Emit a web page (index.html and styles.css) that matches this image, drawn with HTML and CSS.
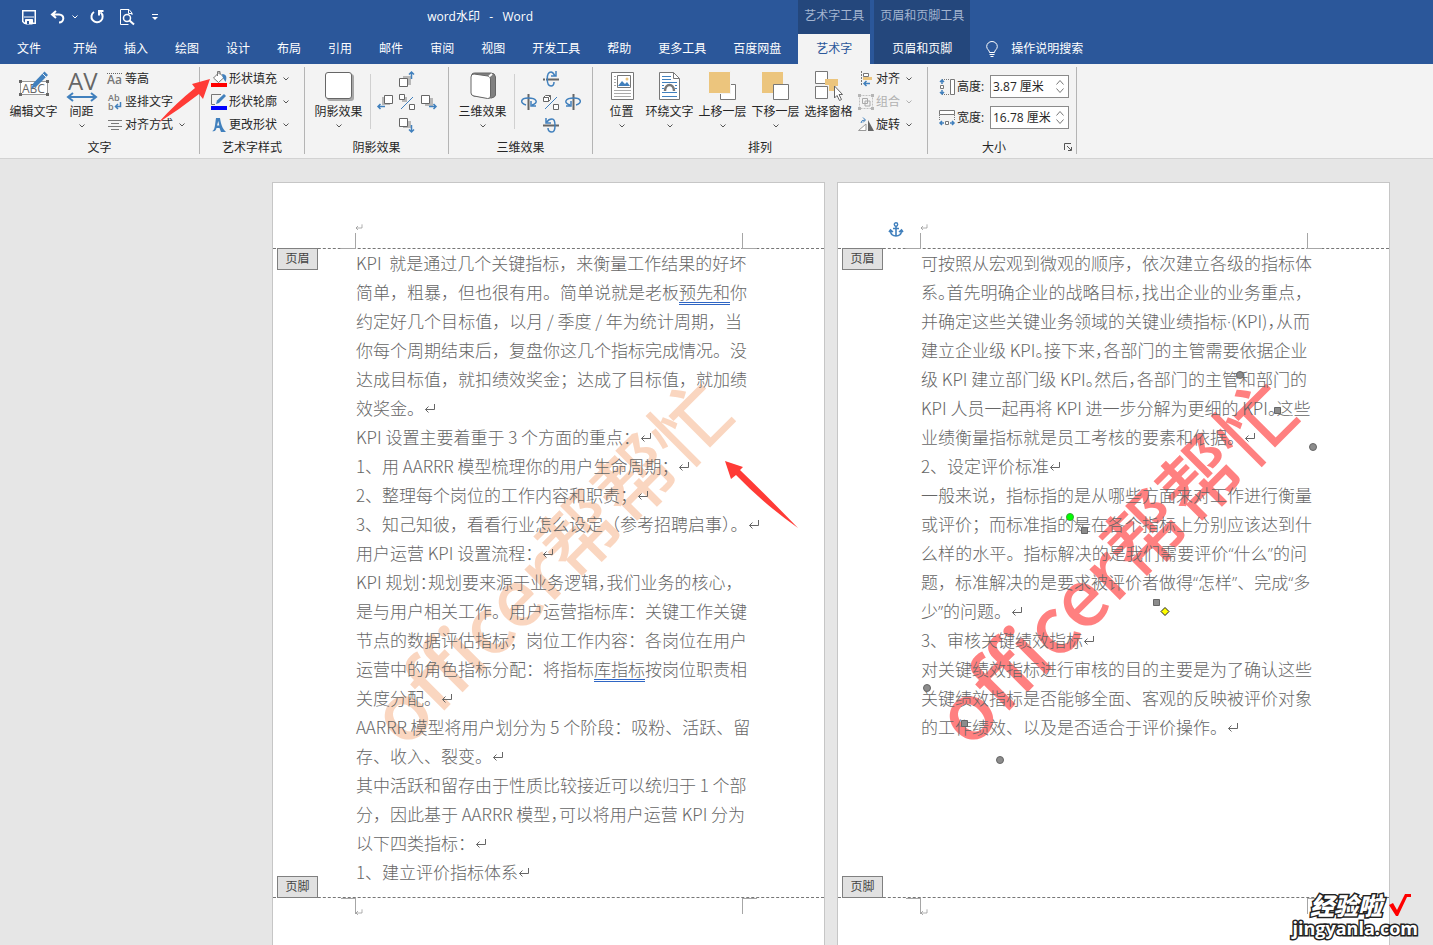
FILE: index.html
```html
<!DOCTYPE html>
<html lang="zh-CN">
<head>
<meta charset="utf-8">
<title>word水印 - Word</title>
<link rel="stylesheet" href="styles.css">
</head>
<body>
<svg class="defs" aria-hidden="true">
  <symbol id="caret" viewBox="0 0 6 4"><path d="M.5.5 3 3 5.5.5" fill="none" stroke="currentColor"/></symbol>
  <symbol id="ret" viewBox="0 0 12 12"><path d="M10.500 2V7.500H1.500M4.500 4.500 1.500 7.500 4.500 10.500" fill="none" stroke="currentColor"/></symbol>
</svg>

<header class="titlebar">
  <div class="main-head">
    <div class="top-row">
      <div class="qat">
        <button class="q-btn" aria-label="保存"><svg width="14" height="14" viewBox="0 0 14 14"><path d="M.75.75h12.500v12.500H2.500L.75 11.500z" fill="none" stroke="#fff" stroke-width="1.500"/><path d="M2 7h10M3.500 14V9.500h7V14z" stroke="#fff" fill="#fff"/><path d="M5 11h2v3H5z" fill="#2b579a"/></svg></button>
        <button class="q-btn undo" aria-label="撤消"><svg width="16" height="14" viewBox="0 0 16 14"><path d="M6 1 2 4.500 6 8M2 4.500h7c6 0 5.500 8 0 8" fill="none" stroke="#fff" stroke-width="2"/></svg></button>
        <button class="q-btn drop" aria-label="撤消列表"><svg width="6" height="4"><use href="#caret"/></svg></button>
        <button class="q-btn redo" aria-label="重复"><svg width="14" height="14" viewBox="0 0 14 14"><path d="M4 2A5.600 5.600 0 1 0 10.500 2.300M13.500 1H9v4.500" fill="none" stroke="#fff" stroke-width="2"/></svg></button>
        <button class="q-btn preview" aria-label="打印预览"><svg width="15" height="16" viewBox="0 0 15 16"><path d="M12 6V4L9 .5H.5v15h8" fill="none" stroke="#fff"/><path d="M8.500.5V4.500H12" fill="none" stroke="#fff"/><circle cx="7" cy="9" r="3.500" fill="none" stroke="#fff" stroke-width="1.500"/><path d="m9.500 11.500 4.500 4" stroke="#fff" stroke-width="2"/></svg></button>
        <button class="q-btn more" aria-label="自定义快速访问工具栏"><svg width="6" height="6" viewBox="0 0 6 6"><path d="M0 .5h6" stroke="#fff"/><path d="M0 3h6L3 6z" fill="#fff"/></svg></button>
      </div>
      <h1 class="title">word水印&nbsp;&nbsp; -&nbsp;&nbsp; Word</h1>
    </div>
    <nav class="tabs">
      <button class="tab file">文件</button><button class="tab">开始</button><button class="tab">插入</button><button class="tab">绘图</button><button class="tab">设计</button><button class="tab">布局</button><button class="tab">引用</button><button class="tab">邮件</button><button class="tab">审阅</button><button class="tab">视图</button><button class="tab">开发工具</button><button class="tab">帮助</button><button class="tab">更多工具</button><button class="tab">百度网盘</button>
    </nav>
  </div>
  <div class="context"><span class="context-name">艺术字工具</span><button class="tab active">艺术字</button></div>
  <div class="context wide"><span class="context-name">页眉和页脚工具</span><button class="tab">页眉和页脚</button></div>
  <button class="tell"><svg width="12" height="16" viewBox="0 0 12 16"><path d="M3.500 11.500C3.500 9 .7 8.500.7 5.500a5.300 5 0 0 1 10.600 0c0 3-2.800 3.500-2.800 6zM3.500 13.500h5M4.500 15.500h3" fill="none" stroke="#fff"/></svg>操作说明搜索</button>
</header>

<section class="ribbon">
  <div class="group g-text">
    <div class="tools">
      <button class="big"><svg width="32" height="32" viewBox="0 0 32 32"><path d="M2.500 11.500h27v13h-27z" fill="#fff" stroke="#9a9a9a"/><path d="M1 10h3v3H1zM28 10h3v3h-3zM1 23h3v3H1zM28 23h3v3h-3z" fill="#666"/><text x="4" y="23" class="ico-abc">ABC</text><path d="m13 19 2.500-6L26.500 1.500l3.500 3.500-11 11z" fill="#4180bd"/><path d="m24.500 3.500 3.500 3.500" stroke="#f3f3f3"/></svg><span>编辑文字</span></button>
      <button class="big narrow"><svg width="32" height="32" viewBox="0 0 32 32"><text x="2" y="20" class="ico-av">AV</text><path d="M2 27h28M7 23l-5 4 5 4M25 23l5 4-5 4" fill="none" stroke="#4180bd" stroke-width="2"/></svg><span>间距</span><svg class="caret" width="6" height="4"><use href="#caret"/></svg></button>
      <div class="small-col">
        <button class="small"><svg width="16" height="16" viewBox="0 0 16 16"><path d="M0 2.500h16" stroke="#666" stroke-dasharray="1 1"/><text x="0" y="13" class="ico-sm">Aa</text></svg>等高</button>
        <button class="small"><svg width="16" height="16" viewBox="0 0 16 16"><text x="1" y="7" class="ico-xs">Ab</text><text x="1" y="16" class="ico-xs">b</text><path d="M13.500 8v4.500H9M11 10l-2.500 2.500L11 15" fill="none" stroke="#4180bd" stroke-width="1.500"/></svg>竖排文字</button>
        <button class="small"><svg width="16" height="16" viewBox="0 0 16 16"><path d="M1 3.500h14M4 6.500h8M1 9.500h14M4 12.500h8" stroke="#777"/></svg>对齐方式<svg class="caret" width="6" height="4"><use href="#caret"/></svg></button>
      </div>
    </div>
    <div class="g-label">文字</div>
  </div>

  <div class="group g-style">
    <div class="tools">
      <div class="small-col">
        <button class="small"><svg width="16" height="16" viewBox="0 0 16 16"><path d="m8 1.500 5 5-5.500 5-5-4.500z" fill="#fff" stroke="#777"/><path d="M6.500 5V.5h2.500v3" fill="none" stroke="#777"/><path d="M11 3c5 0 5 4 3.500 8L12 7z" fill="#4180bd"/><path d="M0 12h16v4H0z" fill="#f00"/></svg>形状填充<svg class="caret" width="6" height="4"><use href="#caret"/></svg></button>
        <button class="small"><svg width="16" height="16" viewBox="0 0 16 16"><path d="M10 .5H.5v10H4" fill="none" stroke="#777"/><path d="m5 10 1-3.500L13 0l2 2-7 7z" fill="#4180bd"/><path d="M0 12h16v4H0z" fill="#00f"/></svg>形状轮廓<svg class="caret" width="6" height="4"><use href="#caret"/></svg></button>
        <button class="small"><svg width="16" height="16" viewBox="0 0 16 16"><path d="M1 14c3 0 3-7 4-13h4c1 6 2 10 6 14h-5L8.500 11H5.500C5 13 4 15 1 14zM6 8.500h2.300L7.300 4z" fill="#4180bd" fill-rule="evenodd"/></svg>更改形状<svg class="caret" width="6" height="4"><use href="#caret"/></svg></button>
      </div>
    </div>
    <div class="g-label">艺术字样式</div>
  </div>

  <div class="group g-fx">
    <div class="tools">
      <button class="big"><svg width="32" height="32" viewBox="0 0 32 32"><rect x="4" y="4" width="27" height="27" rx="3" fill="#a8a8a8"/><rect x="2.500" y="2.500" width="26" height="26" rx="2.500" fill="#fff" stroke="#666"/></svg><span>阴影效果</span><svg class="caret" width="6" height="4"><use href="#caret"/></svg></button>
      <div class="pad5">
        <button class="p-n" aria-label="上移阴影"><svg width="16" height="16" viewBox="0 0 16 16"><path d="M4 5h8v9H4z" fill="#b8b8b8"/><path d="M.5 7.500h8v8h-8z" fill="#fff" stroke="#666"/><path d="M12.500 8V1M10 3.500 12.500 1 15 3.500" fill="none" stroke="#4180bd" stroke-width="1.500"/></svg></button>
        <button class="p-w" aria-label="左移阴影"><svg width="16" height="16" viewBox="0 0 16 16"><path d="M5 3h8v8H5z" fill="#b8b8b8"/><path d="M7.500 1.500h8v8h-8z" fill="#fff" stroke="#666"/><path d="M8 12.500H1M3.500 10 1 12.500 3.500 15" fill="none" stroke="#4180bd" stroke-width="1.500"/></svg></button>
        <button class="p-c" aria-label="设置阴影"><svg width="16" height="16" viewBox="0 0 16 16"><path d="M3 3h5v5H3z" fill="#b8b8b8"/><path d="M.5.5h5v5h-5zM10.500 10.500h5v5h-5z" fill="#fff" stroke="#666"/><path d="M2 15 14 3" stroke="#4180bd"/></svg></button>
        <button class="p-e" aria-label="右移阴影"><svg width="16" height="16" viewBox="0 0 16 16"><path d="M4 4h8v8H4z" fill="#b8b8b8"/><path d="M.5 1.500h8v8h-8z" fill="#fff" stroke="#666"/><path d="M8 12.500h7M12.500 10l2.500 2.500-2.500 2.500" fill="none" stroke="#4180bd" stroke-width="1.500"/></svg></button>
        <button class="p-s" aria-label="下移阴影"><svg width="16" height="16" viewBox="0 0 16 16"><path d="M4 4h8v7H4z" fill="#b8b8b8"/><path d="M.5 1.500h8v8h-8z" fill="#fff" stroke="#666"/><path d="M12.500 8v7M10 12.500l2.500 2.500 2.500-2.500" fill="none" stroke="#4180bd" stroke-width="1.500"/></svg></button>
      </div>
    </div>
    <div class="g-label">阴影效果</div>
  </div>

  <div class="group g-fx">
    <div class="tools">
      <button class="big"><svg width="32" height="32" viewBox="0 0 32 32"><path d="M5 4q1-1 3-1l16 0q4 0 4.500 4v18q0 2-4 3L7 26q-2 0-2-3z" fill="#808080" stroke="#666"/><path d="M4 7q0-3 3-3l14 2q2.500.5 2.500 3v17q0 3-3 2.500L7 26q-3-.5-3-3z" fill="#fff" stroke="#666"/><path d="m22 6.500 3-2.500" stroke="#fff" stroke-width="2"/></svg><span>三维效果</span><svg class="caret" width="6" height="4"><use href="#caret"/></svg></button>
      <div class="pad5">
        <button class="p-n" aria-label="上翘"><svg width="16" height="16" viewBox="0 0 16 16"><path d="M0 8.500h16" stroke="#666" stroke-width="2" stroke-dasharray="2 1 13"/><path d="M8 15C3 15 3 1 8 1c2 0 3 2 4 4M13 0v5H8M8 15c2 0 3-2 3-4" fill="none" stroke="#4180bd" stroke-width="1.500"/></svg></button>
        <button class="p-w" aria-label="左偏"><svg width="16" height="16" viewBox="0 0 16 16"><path d="M7.500 0v16" stroke="#666" stroke-width="2"/><path d="M5 11C-2 9 0 4 7 4c9 0 11 5 4 7M10 7v5h5" fill="none" stroke="#4180bd" stroke-width="1.500"/></svg></button>
        <button class="p-c" aria-label="三维设置"><svg width="16" height="16" viewBox="0 0 16 16"><path d="m.5 3.500 2-2h5v4l-2 2h-5zh5v4M5.500 3.500l2-2M10.500 10.500h5v5h-5z" fill="#fff" stroke="#666"/><path d="M2 15 14 3" stroke="#4180bd"/></svg></button>
        <button class="p-e" aria-label="右偏"><svg width="16" height="16" viewBox="0 0 16 16"><path d="M8.500 0v16" stroke="#666" stroke-width="2"/><path d="M11 11c7-2 5-7-2-7-9 0-11 5-4 7M6 7v5H1" fill="none" stroke="#4180bd" stroke-width="1.500"/></svg></button>
        <button class="p-s" aria-label="下俯"><svg width="16" height="16" viewBox="0 0 16 16"><path d="M0 8.500h16" stroke="#666" stroke-width="2"/><path d="M9 15c4 0 4-13 0-13-3 0-4 1-5 3M3 1v5h5M9 15c-3 0-4-2-4-4" fill="none" stroke="#4180bd" stroke-width="1.500"/></svg></button>
      </div>
    </div>
    <div class="g-label">三维效果</div>
  </div>

  <div class="group g-arrange">
    <div class="tools">
      <button class="big narrow"><svg width="32" height="32" viewBox="0 0 32 32"><path d="M5.500 2.500h22v27h-22z" fill="#fff" stroke="#777"/><path d="M11.500 5.500h13v12h-13z" fill="#fff" stroke="#777"/><path d="m12 16 4-5 3 3 2-2 3 4z" fill="#4180bd"/><circle cx="21" cy="9" r="1.500" fill="#ecc57d"/><path d="M8 6.500h2M8 9.500h2M8 12.500h2M8 15.500h2M8 20.500h17M8 23.500h17M8 26.500h17" stroke="#aaa"/></svg><span>位置</span><svg class="caret" width="6" height="4"><use href="#caret"/></svg></button>
      <button class="big"><svg width="32" height="32" viewBox="0 0 32 32"><path d="M5.500 2.500h14l6 6v21h-20z" fill="#fff" stroke="#777"/><path d="M19.500 2.500v6h6" fill="none" stroke="#777"/><path d="M8 6.500h9M8 9.500h9M8 12.500h15M8 15.500h2M21 15.500h2M8 18.500h2M21 18.500h2M8 22.500h15M8 26.500h15" stroke="#4180bd"/><path d="M11 21c0-8 9-8 9 0" fill="none" stroke="#777" stroke-width="2.500"/></svg><span>环绕文字</span><svg class="caret" width="6" height="4"><use href="#caret"/></svg></button>
      <button class="big"><svg width="32" height="32" viewBox="0 0 32 32"><path d="M13.500 14.500h15v15h-15z" fill="#fff" stroke="#777"/><path d="M1.500 1.500h22v22h-22z" fill="#ecc57d" stroke="#f3f3f3"/></svg><span>上移一层</span><svg class="caret" width="6" height="4"><use href="#caret"/></svg></button>
      <button class="big"><svg width="32" height="32" viewBox="0 0 32 32"><path d="M2 2h21v21H2z" fill="#ecc57d"/><path d="M13.500 14.500h15v15h-15z" fill="#fff" stroke="#777"/></svg><span>下移一层</span><svg class="caret" width="6" height="4"><use href="#caret"/></svg></button>
      <button class="big"><svg width="32" height="32" viewBox="0 0 32 32"><path d="M2.500 1.500h12v12h-12zM2.500 16.500h12v12h-12z" fill="#fff" stroke="#777"/><path d="M12 9h13v7h-4v5h-5v-6h-4z" fill="#ecc57d"/><path d="M21.500 16v12l2.500-2.500 2.500 5 2-1-2.500-5h3.500z" fill="#fff" stroke="#666"/></svg><span>选择窗格</span></button>
      <div class="small-col">
        <button class="small"><svg width="16" height="16" viewBox="0 0 16 16"><path d="M3.500 0v15" stroke="#777" stroke-dasharray="2 1"/><path d="M5.500 2.500h5v3h-5z" fill="#fff" stroke="#777"/><path d="M5 6h9v3H5z" fill="#ecc57d"/><path d="M12 12.500H6M8.500 10 6 12.500 8.500 15" fill="none" stroke="#4180bd" stroke-width="1.500"/></svg>对齐<svg class="caret" width="6" height="4"><use href="#caret"/></svg></button>
        <button class="small" disabled><svg width="16" height="16" viewBox="0 0 16 16"><path d="M1.500 1.500h13v13h-13z" fill="none" stroke="#c0c0c0" stroke-dasharray="2 1"/><path d="M4.500 4.500h5v5h-5zM7 7h5v5H7z" fill="#f3f3f3" stroke="#aaa"/><path d="M0 0h3v3H0zM13 0h3v3h-3zM0 13h3v3H0zM13 13h3v3h-3z" fill="#b5b5b5"/></svg>组合<svg class="caret" width="6" height="4"><use href="#caret"/></svg></button>
        <button class="small"><svg width="16" height="16" viewBox="0 0 16 16"><path d="M.5 13.500 8 7v6.500z" fill="#fff" stroke="#999"/><path d="M10 14V3l6 11z" fill="#666"/><path d="M3 6q0-3 4-3M5 .5 7.500 3 5 5.500" fill="none" stroke="#4180bd"/></svg>旋转<svg class="caret" width="6" height="4"><use href="#caret"/></svg></button>
      </div>
    </div>
    <div class="g-label">排列</div>
  </div>

  <div class="group g-size">
    <div class="tools sizes">
      <div class="size-row">
        <svg width="16" height="16" viewBox="0 0 16 16"><path d="M11.500.5h4v15h-4z" fill="#fff" stroke="#777"/><path d="M3 .5h8M3 15.500h8" stroke="#777" stroke-dasharray="1 1"/><path d="M1.500 6.500h3v3h-3z" fill="#fff" stroke="#777"/><path d="M3 5V1M1 3l2-2 2 2M3 11v4M1 13l2 2 2-2" fill="none" stroke="#4180bd" stroke-width="1.500"/></svg>
        <label for="h">高度:</label>
        <div class="spin"><input id="h" type="text" value="3.87 厘米"><div class="arrows"><button aria-label="增加高度"><svg width="8" height="5" viewBox="0 0 8 5"><path d="m.5 4.500 3.500-4 3.500 4" fill="none" stroke="#777"/></svg></button><button aria-label="减少高度"><svg width="8" height="5" viewBox="0 0 8 5"><path d="m.5.5 3.500 4 3.500-4" fill="none" stroke="#777"/></svg></button></div></div>
      </div>
      <div class="size-row">
        <svg width="16" height="16" viewBox="0 0 16 16"><path d="M.5.5h15v4H.5z" fill="#fff" stroke="#777"/><path d="M.5 5v6M15.500 5v6" stroke="#777" stroke-dasharray="1 1"/><path d="M6.500 11.500h3v3h-3z" fill="#fff" stroke="#777"/><path d="M5 13H1M3 11l-2 2 2 2M11 13h4M13 11l2 2-2 2" fill="none" stroke="#4180bd" stroke-width="1.500"/></svg>
        <label for="w">宽度:</label>
        <div class="spin"><input id="w" type="text" value="16.78 厘米"><div class="arrows"><button aria-label="增加宽度"><svg width="8" height="5" viewBox="0 0 8 5"><path d="m.5 4.500 3.500-4 3.500 4" fill="none" stroke="#777"/></svg></button><button aria-label="减少宽度"><svg width="8" height="5" viewBox="0 0 8 5"><path d="m.5.5 3.500 4 3.500-4" fill="none" stroke="#777"/></svg></button></div></div>
      </div>
    </div>
    <div class="g-label with-launch"><span>大小</span><button class="launch" aria-label="大小设置"><svg width="8" height="8" viewBox="0 0 8 8"><path d="M.5 7V.5H7M3 3l4 4M7.500 4v3.500H4" fill="none" stroke="#555"/></svg></button></div>
  </div>
</section>

<main class="workspace">
  <article class="page">
    <svg class="watermark peach" viewBox="0 0 551 762"><text x="280" y="382" dy="26" transform="rotate(-45 280 382)">officer帮帮忙</text></svg>
    <div class="page-head"><i class="mark l"></i><i class="mark r"></i><svg class="ret-s" width="8" height="8"><use href="#ret"/></svg><span class="tag">页眉</span></div>
    <div class="body">
      <p class="full">KPI&nbsp; 就是通过几个关键指标，来衡量工作结果的好坏</p>
      <p class="full">简单，粗暴，但也很有用。简单说就是老板<u>预先和</u>你</p>
      <p class="full">约定好几个目标值，以月 / 季度 / 年为统计周期，当</p>
      <p class="full">你每个周期结束后，复盘你这几个指标完成情况。没</p>
      <p class="full">达成目标值，就扣绩效奖金；达成了目标值，就加绩</p>
      <p>效奖金。<svg class="ret"><use href="#ret"/></svg></p>
      <p>KPI 设置主要着重于 3 个方面的重点：<svg class="ret"><use href="#ret"/></svg></p>
      <p>1、用 AARRR 模型梳理你的用户生命周期；<svg class="ret"><use href="#ret"/></svg></p>
      <p>2、整理每个岗位的工作内容和职责；<svg class="ret"><use href="#ret"/></svg></p>
      <p>3、知己知彼，看看行业怎么设定（参考招聘启事<span class="half">）</span>。<svg class="ret"><use href="#ret"/></svg></p>
      <p>用户运营 KPI 设置流程：<svg class="ret"><use href="#ret"/></svg></p>
      <p class="full">KPI 规划<span class="half">：</span>规划要来源于业务逻辑<span class="half">，</span>我们业务的核心，</p>
      <p class="full">是与用户相关工作。用户运营指标库：关键工作关键</p>
      <p class="full">节点的数据评估指标；岗位工作内容：各岗位在用户</p>
      <p class="full">运营中的角色指标分配：将指标<u>库指标</u>按岗位职责相</p>
      <p>关度分配。<svg class="ret"><use href="#ret"/></svg></p>
      <p class="full">AARRR 模型将用户划分为 5 个阶段：吸粉、活跃、留</p>
      <p>存、收入、裂变。<svg class="ret"><use href="#ret"/></svg></p>
      <p class="full">其中活跃和留存由于性质比较接近可以统归于 1 个部</p>
      <p class="full">分，因此基于 AARRR 模型<span class="half">，</span>可以将用户运营 KPI 分为</p>
      <p>以下四类指标：<svg class="ret"><use href="#ret"/></svg></p>
      <p>1、建立评价指标体系<svg class="ret"><use href="#ret"/></svg></p>
    </div>
    <div class="page-foot"><i class="mark l"></i><i class="mark r"></i><svg class="ret-s" width="8" height="8"><use href="#ret"/></svg><span class="tag">页脚</span></div>
  </article>

  <article class="page">
    <svg class="watermark red" viewBox="0 0 551 762"><text x="280" y="382" dy="26" transform="rotate(-45 280 382)">officer帮帮忙</text></svg>
    <div class="page-head"><i class="mark l"></i><i class="mark r"></i><svg class="anchor" width="14" height="16" viewBox="0 0 14 16"><path d="M7 4v10M4 6.500h6M1.500 9q.5 5 5.500 5t5.500-5M0 10l1.500-2L4 10M10 10l2.500-2L14 10" fill="none" stroke="#4180bd" stroke-width="1.600"/><circle cx="7" cy="2.500" r="1.700" fill="none" stroke="#4180bd" stroke-width="1.400"/></svg><svg class="ret-s" width="8" height="8"><use href="#ret"/></svg><span class="tag">页眉</span></div>
    <div class="body">
      <p class="full">可按照从宏观到微观的顺序，依次建立各级的指标体</p>
      <p class="full">系<span class="half">。</span>首先明确企业的战略目标<span class="half">，</span>找出企业的业务重点，</p>
      <p class="full">并确定这些关键业务领域的关键业绩指标<span class="latin">·</span>(KPI)<span class="half">，</span>从而</p>
      <p class="full">建立企业级 KPI<span class="half">。</span>接下来<span class="half">，</span>各部门的主管需要依据企业</p>
      <p class="full">级 KPI 建立部门级 KPI<span class="half">。</span>然后<span class="half">，</span>各部门的主管和部门的</p>
      <p class="full">KPI 人员一起再将 KPI 进一步分解为更细的 KPI<span class="half">。</span>这些</p>
      <p>业绩衡量指标就是员工考核的要素和依据。<svg class="ret"><use href="#ret"/></svg></p>
      <p>2、设定评价标准<svg class="ret"><use href="#ret"/></svg></p>
      <p class="full">一般来说，指标指的是从哪些方面来对工作进行衡量</p>
      <p class="full">或评价；而标准指的是在各个指标上分别应该达到什</p>
      <p class="full">么样的水平。指标解决的是我们需要评价<span class="latin">“</span>什么<span class="latin">”</span>的问</p>
      <p class="full">题，标准解决的是要求被评价者做得<span class="latin">“</span>怎样<span class="latin">”</span>、完成<span class="latin">“</span>多</p>
      <p>少<span class="latin">”</span>的问题。<svg class="ret"><use href="#ret"/></svg></p>
      <p>3、审核关键绩效指标<svg class="ret"><use href="#ret"/></svg></p>
      <p class="full">对关键绩效指标进行审核的目的主要是为了确认这些</p>
      <p class="full">关键绩效指标是否能够全面、客观的反映被评价对象</p>
      <p>的工作绩效、以及是否适合于评价操作。<svg class="ret"><use href="#ret"/></svg></p>
    </div>
    <div class="page-foot"><i class="mark l"></i><i class="mark r"></i><svg class="ret-s" width="8" height="8"><use href="#ret"/></svg><span class="tag">页脚</span></div>
    <svg class="handles" viewBox="0 0 551 762">
      <path d="M232 334 246 347" stroke="#777"/>
      <g fill="#8c8c8c" stroke="#666"><circle cx="402" cy="192" r="3.500"/><circle cx="475" cy="264" r="3.500"/><circle cx="89" cy="505" r="3.500"/><circle cx="162" cy="577" r="3.500"/><path d="M436.500 224.500h6v6h-6zM243.500 344.500h6v6h-6zM315.500 416.500h6v6h-6zM123.500 537.500h6v6h-6z"/></g>
      <circle cx="232" cy="334" r="3.500" fill="#0f0" stroke="#3a3"/><path d="m327 424.500 4 4-4 4-4-4z" fill="#ff0" stroke="#222"/>
    </svg>
  </article>
</main>

<svg class="pointer p1" width="52" height="45" viewBox="0 0 52 45"><path d="M52 0 34 5l3 4Q18 24 0 44 22 30 41 15l4 5z" fill="#ff3b36"/></svg>
<svg class="pointer p2" width="73" height="67" viewBox="0 0 73 67"><path d="M0 0 18 6l-3 3Q44 37 73 67 39 43 11 14L6 18z" fill="#ff3b36"/></svg>

<aside class="brand">
  <div class="brand-top"><span>经验啦</span><svg width="24" height="24" viewBox="0 0 24 24"><path d="m1 12 4-2 4 7L17 1h6v3h-4L10 23H8z" fill="#f00"/></svg></div>
  <div class="brand-url">jingyanla.com</div>
</aside>
</body>
</html>
```
FILE: styles.css
```css
* { box-sizing: border-box; }
body {
  margin: 0;
  height: 100vh;
  display: flex;
  flex-direction: column;
  position: relative;
  overflow: hidden;
  background: #e6e6e6;
  font: 12px/16px "Open Sans", "Noto Sans CJK SC", sans-serif;
  color: #262626;
}
button { font: inherit; color: inherit; background: none; border: 0; padding: 0; white-space: nowrap; }
svg { flex: none; overflow: visible; }
.defs { position: absolute; width: 0; height: 0; }

/* title bar and tabs */
.titlebar { display: flex; flex: none; height: 64px; background: #2b579a; color: #fff; }
.main-head { display: flex; flex-direction: column; margin-right: 4px; }
.top-row { display: flex; height: 34px; align-items: center; }
.qat { display: flex; align-items: center; width: 166px; padding-left: 22px; }
.q-btn { display: flex; }
.undo { margin-left: 14px; }
.drop { margin-left: 6px; }
.redo { margin-left: 12px; }
.preview { margin-left: 16px; }
.more { margin-left: 17px; }
.title { flex: 1; margin: 0; font-size: 12px; font-weight: 400; line-height: 32px; text-align: center; }
.tabs { display: flex; gap: 1px; padding-left: 4px; }
.tab { height: 30px; padding: 0 13px; }
.file { margin-right: 5px; }
.context { display: flex; flex-direction: column; align-items: stretch; width: 72px; margin-right: 4px; background: #24477c; }
.context.wide { width: 96px; }
.context-name { height: 34px; line-height: 32px; text-align: center; color: #a3b5d0; white-space: nowrap; }
.context .tab { padding: 0; }
.tab.active { background: #f3f3f3; color: #2b579a; }
.tell { display: flex; align-items: center; gap: 13px; height: 30px; margin: 34px 0 0 12px; }

/* ribbon */
.ribbon { display: flex; flex: none; padding: 3px 0 4px; background: #f3f3f3; border-bottom: 1px solid #d2d2d2; }
.group { display: flex; flex-direction: column; border-right: 1px solid #b4b4b4; }
.tools { display: flex; height: 69px; padding-left: 7px; }
.g-label { padding-top: 4px; height: 18px; line-height: 16px; text-align: center; }
.g-text { width: 200px; }
.g-style { width: 105px; }
.g-fx { width: 144px; }
.g-arrange { width: 335px; }
.g-size { width: 149px; }
.big { display: flex; flex-direction: column; align-items: center; width: 53px; padding-top: 3px; }
.big span { margin-top: 2px; }
.big .caret { margin-top: 4px; color: #555; }
.big.narrow { width: 43px; }
.small-col { display: flex; flex-direction: column; margin-left: 3px; }
.g-text .small-col, .g-style .small-col { margin-left: 4px; }
.small { display: flex; align-items: center; gap: 2px; height: 23px; }
.small .caret { margin-left: 4px; color: #555; }
.small:disabled { color: #b1b1b1; }
.small:disabled .caret { color: #b1b1b1; }
.ico-abc { font: 12px "Open Sans", sans-serif; fill: #666; }
.ico-av { font: 24px "Open Sans", sans-serif; fill: #666; }
.ico-sm { font: 600 12px "Open Sans", sans-serif; fill: #777; }
.ico-xs { font: 600 9px "Open Sans", sans-serif; fill: #777; }
.pad5 {
  display: grid;
  grid-template: repeat(3, 23px) / repeat(3, 22px);
  place-items: center;
  margin-left: 5px;
  padding-left: 4px;
  background: linear-gradient(#d0d0d0, #d0d0d0) 0 7px / 1px 55px no-repeat;
}
.pad5 button { display: flex; }
.p-n { grid-area: 1 / 2; }
.p-w { grid-area: 2 / 1; }
.p-c { grid-area: 2 / 2; }
.p-e { grid-area: 2 / 3; }
.p-s { grid-area: 3 / 2; }
.sizes { flex-direction: column; gap: 8px; padding: 8px 7px 0 11px; }
.size-row { display: flex; align-items: center; height: 23px; }
.size-row label { flex: 1; margin-left: 2px; white-space: nowrap; }
.spin { display: flex; width: 79px; height: 23px; border: 1px solid #8a8a8a; background: #fff; }
.spin input { flex: 1; min-width: 0; border: 0; padding: 0 0 0 2px; font: inherit; color: inherit; background: none; outline: 0; }
.arrows { display: flex; flex-direction: column; justify-content: space-evenly; width: 16px; }
.arrows button { display: flex; justify-content: center; }
.with-launch { display: flex; }
.with-launch span { flex: 1; }
.launch { display: flex; align-items: center; justify-content: flex-end; width: 12px; margin-right: 4px; }

/* document */
.workspace { display: flex; flex: 1; gap: 12px; min-height: 0; padding: 23px 43px 0 272px; }
.page { position: relative; display: flex; flex: 1; flex-direction: column; min-width: 0; background: #fff; border: 1px solid #c6c6c6; border-bottom: 0; }
.page-head { position: relative; flex: none; height: 66px; border-bottom: 1px dashed #777; }
.page-foot { position: relative; flex: 1; border-top: 1px dashed #777; }
.tag { position: absolute; left: 4px; top: 65px; width: 41px; height: 22px; border: 1px solid #808080; background: #e1e1e1; color: #444; line-height: 20px; text-align: center; }
.page-foot .tag { top: -22px; }
.mark { position: absolute; width: 15px; height: 16px; bottom: -1px; border: 0 solid #a6a6a6; border-bottom-width: 1px; }
.mark.l { left: 68px; border-right-width: 1px; }
.mark.r { right: 67px; border-left-width: 1px; }
.page-foot .mark { top: 0; bottom: auto; border-bottom-width: 0; border-top-width: 1px; }
.ret-s { position: absolute; left: 82px; top: 40px; color: #888; }
.page-foot .ret-s { top: 10px; }
.anchor { position: absolute; left: 51px; top: 39px; }
.body {
  position: relative;
  flex: none;
  min-height: 649px;
  margin: -1px 82px 0 83px;
  font: 300 17px/29px "Noto Sans CJK SC", sans-serif;
  color: #666;
}
.body p { margin: 0; height: 29px; white-space: nowrap; }
.body .full { text-align: justify; text-align-last: justify; }
.body u { text-decoration: underline double #2f66c4 1px; text-underline-offset: 3px; }
.half { font-feature-settings: "halt"; }
.latin { font-family: "Open Sans", sans-serif; line-height: 1; }
.ret { width: 12px; height: 12px; vertical-align: 1px; }
.watermark, .handles { position: absolute; left: 0; top: 0; width: 551px; height: 762px; }
.watermark text { font: 500 78px "Noto Sans CJK SC", sans-serif; text-anchor: middle; }
.peach { fill: #fad6c0; }
.red { fill: #ff8080; }

/* annotations */
.pointer { position: absolute; }
.p1 { left: 158px; top: 79px; }
.p2 { left: 725px; top: 461px; }
.brand { position: absolute; right: 15px; bottom: 6px; color: #fff; -webkit-text-stroke: 3px #222; paint-order: stroke fill; }
.brand-top { display: flex; align-items: center; justify-content: flex-end; gap: 6px; height: 24px; padding-right: 6px; font: italic 900 24px/24px "Noto Sans CJK SC", sans-serif; }
.brand-url { font: 700 18px/22px "Open Sans", sans-serif; }
```
